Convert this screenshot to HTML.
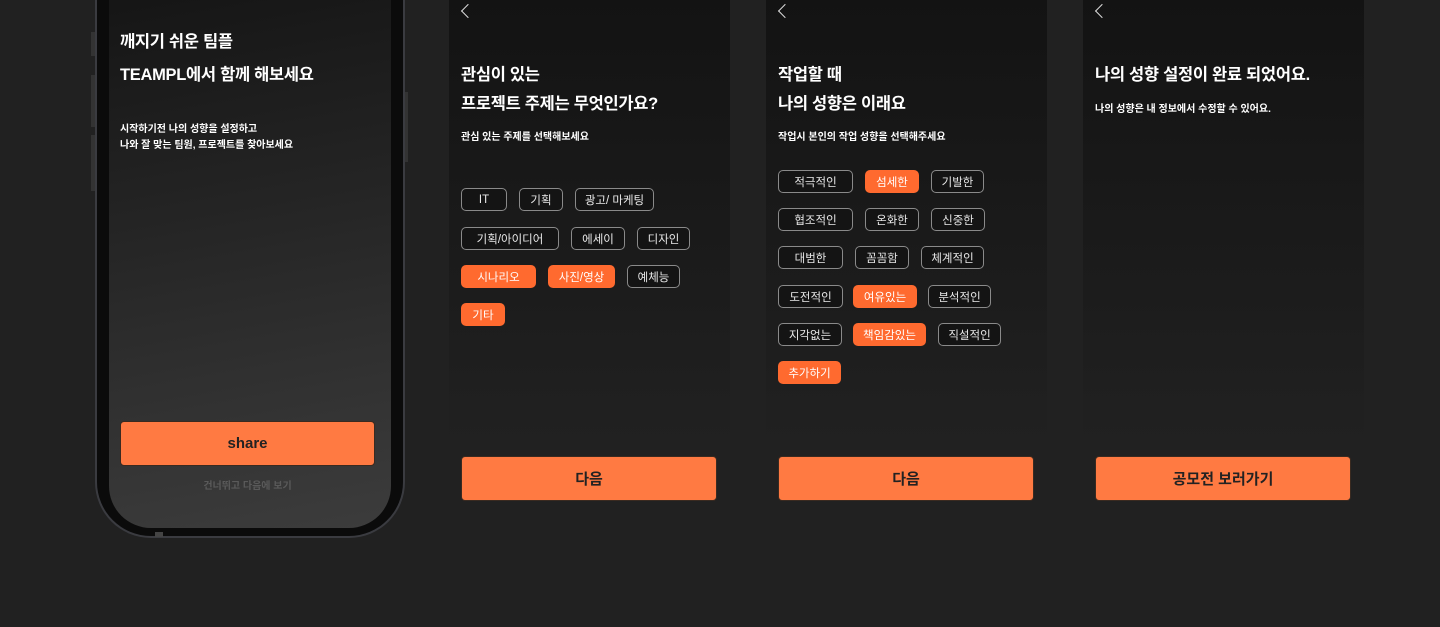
<!DOCTYPE html>
<html><head><meta charset="utf-8"><style>
*{margin:0;padding:0;box-sizing:border-box}
body{width:1440px;height:627px;background:#212121;position:relative;overflow:hidden;font-family:"Liberation Sans","Noto Sans CJK KR",sans-serif;color:#fff}
.abs{position:absolute}
.phone{left:95px;top:-30px;width:310px;height:568px;border-radius:0 0 56px 56px;background:#0b0b0b;border:2px solid #3a3b40;border-top:none}
.pscreen{left:109px;top:-10px;width:282px;height:538px;border-radius:0 0 42px 42px;background:linear-gradient(170deg,#151515 0%,#242424 40%,#3c3c3c 100%)}
.scr{top:0;width:281px;height:520px;background:linear-gradient(180deg,#131313 0%,#1b1b1b 50%,#212121 85%)}
.h{font-size:16.5px;font-weight:bold;letter-spacing:-0.3px}
.s{font-size:10px;font-weight:bold}
.btn{width:256px;height:45px;background:#ff7a42;border-radius:4px;border:1px solid #3a2a20;color:#222;font-weight:bold;font-size:15px;display:flex;align-items:center;justify-content:center}
.tag{position:absolute;height:23px;border:1.3px solid #8a8a8a;border-radius:5px;font-size:11.5px;color:#e8e8e8;display:flex;align-items:center;justify-content:center;background:#141414}
.tag.o{background:#ff6a2f;border-color:#ff6a2f;color:#fff}
.back{width:10px;height:10px;border-left:1.6px solid #ddd;border-bottom:1.6px solid #ddd;transform:rotate(45deg)}
</style></head><body>
<div class="abs" style="left:91px;top:32px;width:4px;height:24px;background:#333"></div>
<div class="abs" style="left:91px;top:75px;width:4px;height:52px;background:#333"></div>
<div class="abs" style="left:91px;top:135px;width:4px;height:56px;background:#333"></div>
<div class="abs" style="left:404px;top:92px;width:4px;height:70px;background:#333"></div>
<div class="abs phone"></div>
<div class="abs pscreen"></div>
<div class="abs" style="left:155px;top:532px;width:8px;height:5px;background:#444"></div>
<div class="abs h" style="left:120px;top:28px">깨지기 쉬운 팀플</div>
<div class="abs h" style="left:120px;top:61px">TEAMPL에서 함께 해보세요</div>
<div class="abs s" style="left:120px;top:122px;line-height:16px">시작하기전 나의 성향을 설정하고<br>나와 잘 맞는 팀원, 프로젝트를 찾아보세요</div>
<div class="abs btn" style="left:120px;top:421px;width:255px">share</div>
<div class="abs" style="left:120px;top:477px;width:255px;text-align:center;font-size:10px;color:#5a5a5a;font-weight:bold">건너뛰고 다음에 보기</div>

<div class="abs scr" style="left:449px"></div>
<div class="abs back" style="left:463px;top:6px"></div>
<div class="abs h" style="left:461px;top:61px">관심이 있는</div>
<div class="abs h" style="left:461px;top:90px">프로젝트 주제는 무엇인가요?</div>
<div class="abs s" style="left:461px;top:128px">관심 있는 주제를 선택해보세요</div>
<div class="tag" style="left:461px;top:188px;width:46px">IT</div>
<div class="tag" style="left:519px;top:188px;width:44px">기획</div>
<div class="tag" style="left:575px;top:188px;width:79px">광고/ 마케팅</div>
<div class="tag" style="left:461px;top:227px;width:98px">기획/아이디어</div>
<div class="tag" style="left:571px;top:227px;width:54px">에세이</div>
<div class="tag" style="left:637px;top:227px;width:53px">디자인</div>
<div class="tag o" style="left:461px;top:265px;width:75px">시나리오</div>
<div class="tag o" style="left:548px;top:265px;width:67px">사진/영상</div>
<div class="tag" style="left:627px;top:265px;width:53px">예체능</div>
<div class="tag o" style="left:461px;top:303px;width:44px">기타</div>
<div class="abs btn" style="left:461px;top:456px">다음</div>

<div class="abs scr" style="left:766px"></div>
<div class="abs back" style="left:780px;top:6px"></div>
<div class="abs h" style="left:778px;top:61px">작업할 때</div>
<div class="abs h" style="left:778px;top:90px">나의 성향은 이래요</div>
<div class="abs s" style="left:778px;top:128px">작업시 본인의 작업 성향을 선택해주세요</div>
<div class="tag" style="left:778px;top:170px;width:75px">적극적인</div>
<div class="tag o" style="left:865px;top:170px;width:54px">섬세한</div>
<div class="tag" style="left:931px;top:170px;width:53px">기발한</div>
<div class="tag" style="left:778px;top:208px;width:75px">협조적인</div>
<div class="tag" style="left:865px;top:208px;width:54px">온화한</div>
<div class="tag" style="left:931px;top:208px;width:54px">신중한</div>
<div class="tag" style="left:778px;top:246px;width:65px">대범한</div>
<div class="tag" style="left:855px;top:246px;width:54px">꼼꼼함</div>
<div class="tag" style="left:921px;top:246px;width:63px">체계적인</div>
<div class="tag" style="left:778px;top:285px;width:65px">도전적인</div>
<div class="tag o" style="left:853px;top:285px;width:64px">여유있는</div>
<div class="tag" style="left:928px;top:285px;width:63px">분석적인</div>
<div class="tag" style="left:778px;top:323px;width:64px">지각없는</div>
<div class="tag o" style="left:853px;top:323px;width:73px">책임감있는</div>
<div class="tag" style="left:938px;top:323px;width:63px">직설적인</div>
<div class="tag o" style="left:778px;top:361px;width:63px">추가하기</div>
<div class="abs btn" style="left:778px;top:456px">다음</div>

<div class="abs scr" style="left:1083px"></div>
<div class="abs back" style="left:1097px;top:6px"></div>
<div class="abs h" style="left:1095px;top:61px">나의 성향 설정이 완료 되었어요.</div>
<div class="abs s" style="left:1095px;top:100px">나의 성향은 내 정보에서 수정할 수 있어요.</div>
<div class="abs btn" style="left:1095px;top:456px">공모전 보러가기</div>
</body></html>
